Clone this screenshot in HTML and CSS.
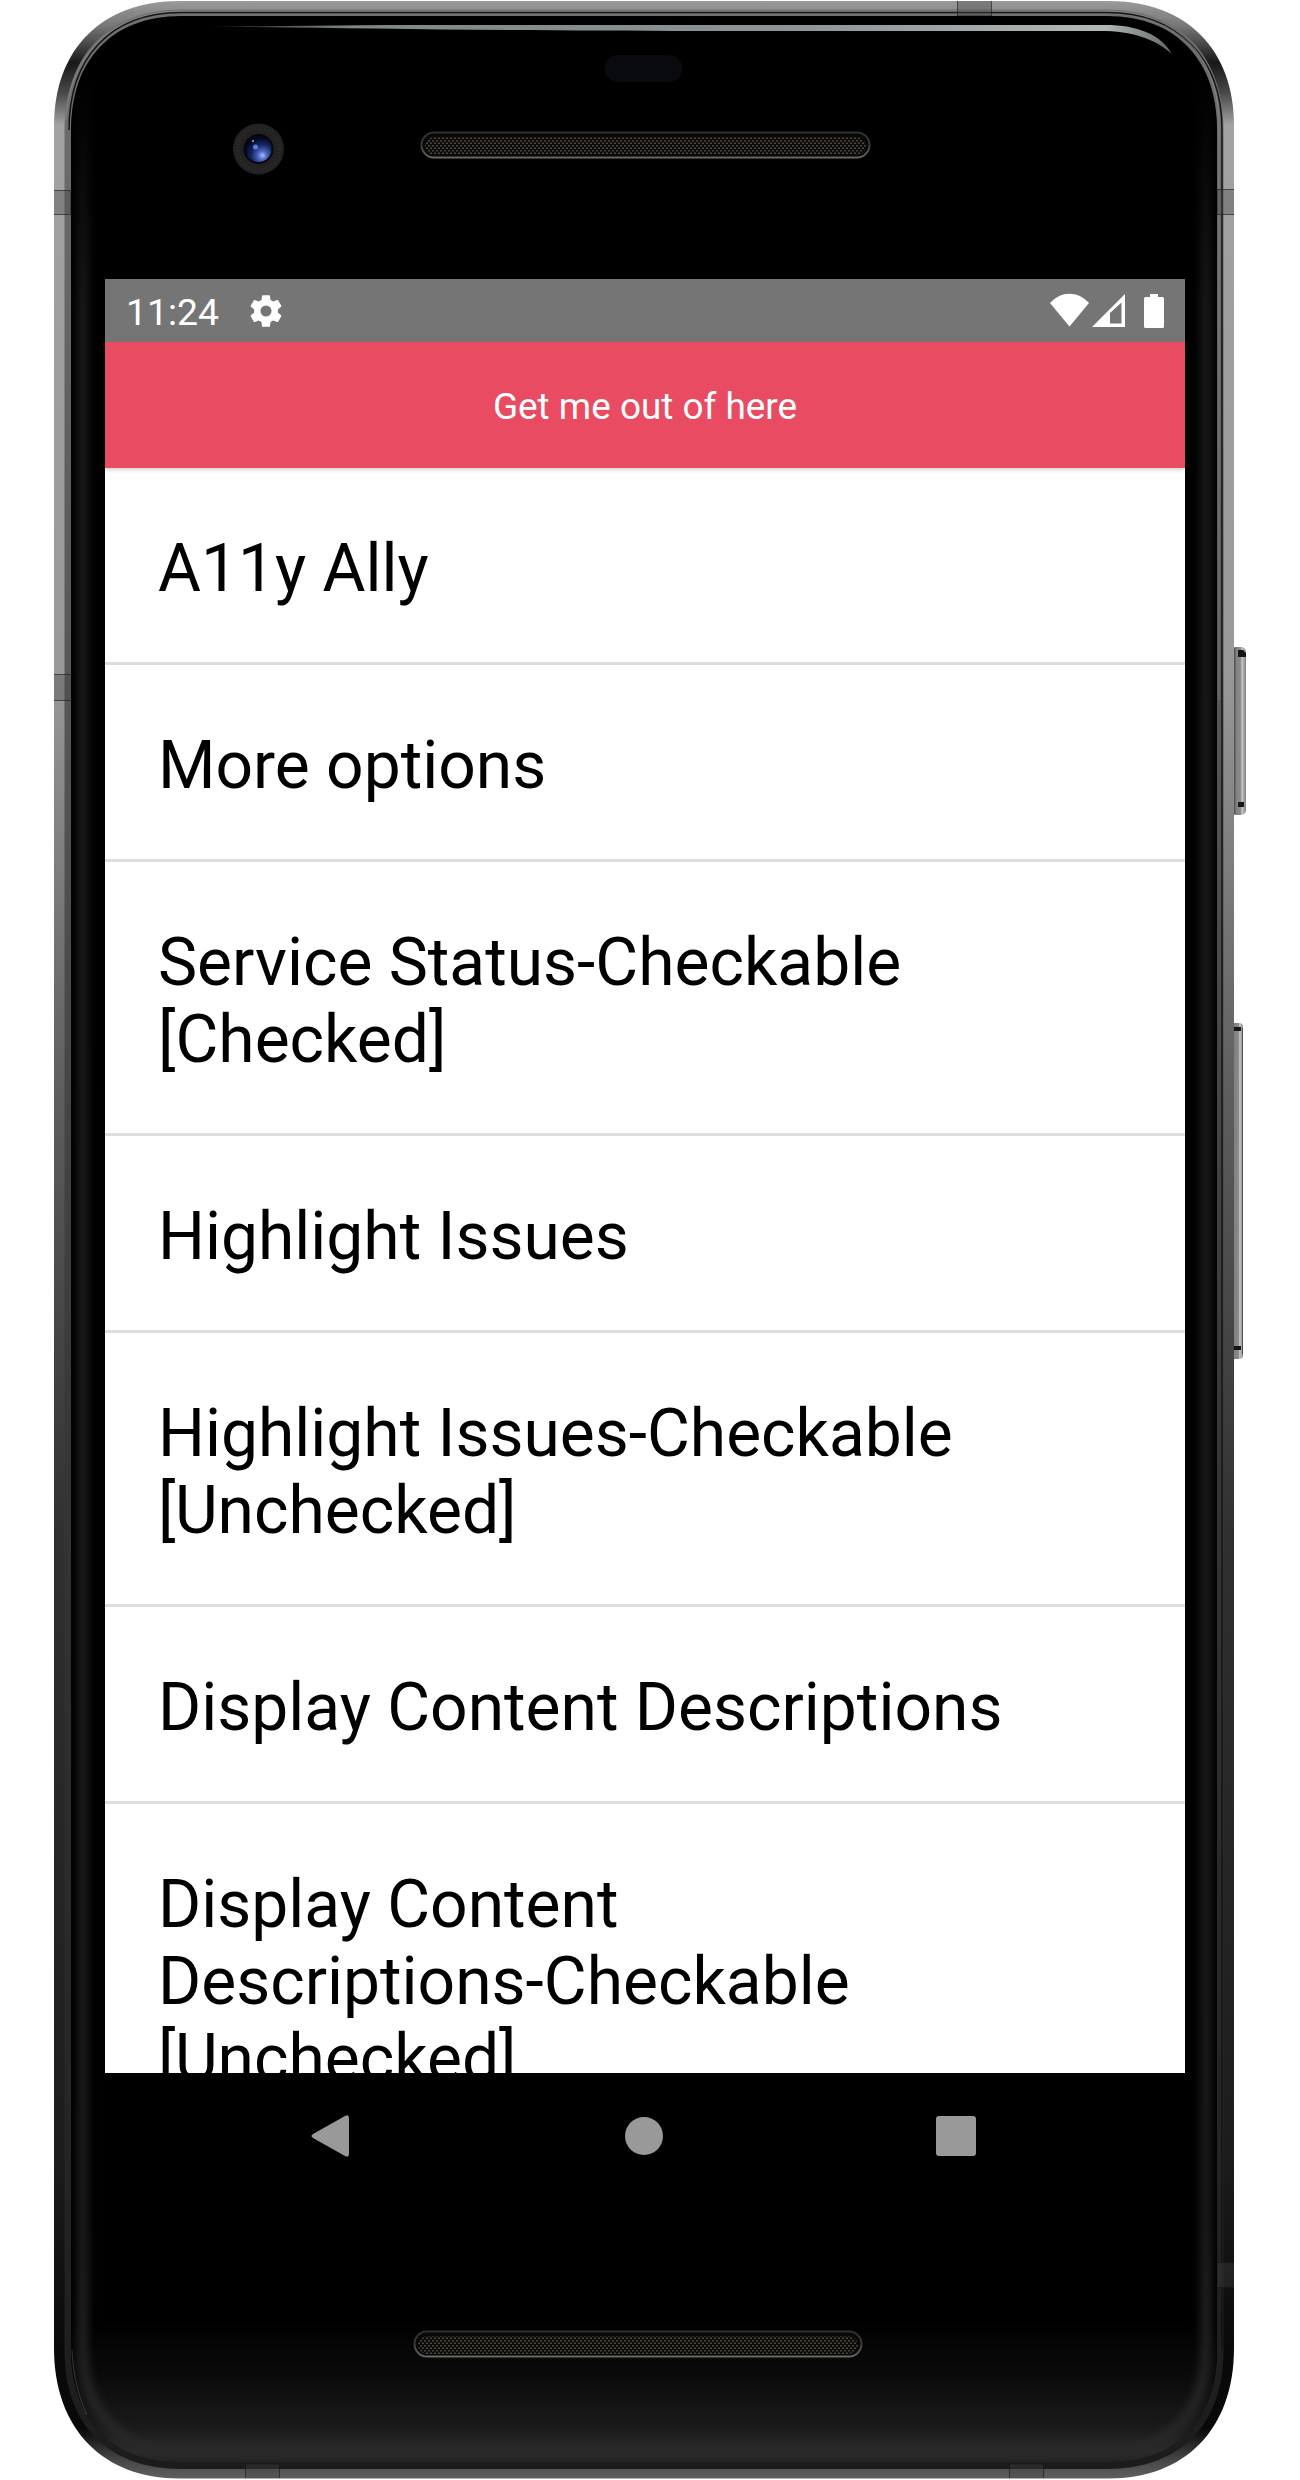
FILE: index.html
```html
<!DOCTYPE html>
<html lang="en">
<head>
<meta charset="utf-8">
<title>A11y Ally</title>
<link rel="stylesheet" href="styles.css">
</head>
<body>
<div class="device">
  <svg class="shell" width="1300" height="2480" viewBox="0 0 1300 2480" aria-hidden="true">
    <defs>
      <linearGradient id="metal" x1="0" y1="0" x2="0" y2="1">
        <stop offset="0" stop-color="#9a9a9a"/><stop offset=".01" stop-color="#777"/>
        <stop offset=".025" stop-color="#181818"/><stop offset=".037" stop-color="#484848"/>
        <stop offset=".05" stop-color="#a2a2a2"/><stop offset=".27" stop-color="#999"/>
        <stop offset=".43" stop-color="#616161"/><stop offset=".62" stop-color="#303030"/>
        <stop offset=".87" stop-color="#1c1c1c"/><stop offset=".95" stop-color="#090909"/>
        <stop offset=".98" stop-color="#090909"/><stop offset=".992" stop-color="#444"/>
        <stop offset="1" stop-color="#606060"/>
      </linearGradient>
      <linearGradient id="bevel" x1="0" y1="0" x2="0" y2="1">
        <stop offset="0" stop-color="#707070"/><stop offset=".3" stop-color="#555"/>
        <stop offset=".6" stop-color="#353535"/><stop offset="1" stop-color="#1c1c1c"/>
      </linearGradient>
      <linearGradient id="sheen" gradientUnits="userSpaceOnUse" x1="0" y1="70" x2="0" y2="2463">
        <stop offset="0" stop-color="#000"/><stop offset=".1" stop-color="#1c1c1c"/>
        <stop offset=".9" stop-color="#1e1e1e"/><stop offset="1" stop-color="#2a2a2a"/>
      </linearGradient>
      <linearGradient id="bottomGlow" x1="0" y1="0" x2="0" y2="1">
        <stop offset="0" stop-color="#000"/><stop offset=".4" stop-color="#0b0b0b"/>
        <stop offset=".75" stop-color="#1a1a1a"/><stop offset=".92" stop-color="#2b2b2b"/>
        <stop offset="1" stop-color="#202020"/>
      </linearGradient>
      <linearGradient id="shine" x1="0" x2="1">
        <stop offset="0" stop-color="#889292" stop-opacity=".2"/><stop offset=".15" stop-color="#7c8888"/>
        <stop offset=".6" stop-color="#8a9494"/><stop offset=".93" stop-color="#b0b8b8"/>
        <stop offset="1" stop-color="#606868"/>
      </linearGradient>
      <linearGradient id="rim" x1="0" y1="0" x2="0" y2="1">
        <stop offset="0" stop-color="#303030"/><stop offset=".5" stop-color="#3a3a3a"/>
        <stop offset="1" stop-color="#6a6661"/>
      </linearGradient>
      <linearGradient id="key" x1="0" x2="1">
        <stop offset="0" stop-color="#777"/><stop offset=".65" stop-color="#8a8a8a"/>
        <stop offset=".75" stop-color="#c8c8c8"/><stop offset="1" stop-color="#808080"/>
      </linearGradient>
      <radialGradient id="lens" cx=".65" cy=".75" r=".7">
        <stop offset="0" stop-color="#a9bcf5"/><stop offset=".25" stop-color="#4c66c0"/>
        <stop offset=".6" stop-color="#162661"/><stop offset="1" stop-color="#03071c"/>
      </radialGradient>
      <pattern id="mesh" width="4" height="5" patternUnits="userSpaceOnUse">
        <rect width="4" height="5" fill="#0d0c0a"/>
        <rect x="0" y="0" width="2" height="1.5" fill="#4a463d"/>
        <rect x="2" y="2.5" width="2" height="1.5" fill="#4a463d"/>
      </pattern>
      <filter id="soft" x="-10%" y="-10%" width="120%" height="120%" color-interpolation-filters="sRGB"><feGaussianBlur stdDeviation="4"/></filter>
      <clipPath id="glassClip"><path d="M71 130C71 60 112 16 181 16H1107C1176 16 1217 60 1217 130V2350C1217 2419 1176 2463 1107 2463H181C112 2463 71 2419 71 2350Z"/></clipPath>
    </defs>
    <!-- side keys -->
    <rect x="1230" y="647" width="16" height="168" rx="5" fill="url(#key)"/>
    <path d="M1238 650h5l3 3v4h-8zM1238 802h6v5h-6z" fill="#151515"/>
    <path d="M1234 648v166" stroke="#555" stroke-width="3"/>
    <rect x="1230" y="1023" width="13" height="336" rx="4" fill="url(#key)"/>
    <path d="M1234 1027h7v4h-7zM1234 1346h7v4h-7z" fill="#151515"/>
    <path d="M1242.500 1028v326" stroke="#505050"/>
    <!-- frame -->
    <path d="M54 126C54 49 102 1 179 1H1109C1186 1 1234 49 1234 126V2348C1234 2430 1184 2478.500 1109 2478.500H179C104 2478.500 54 2430 54 2348Z" fill="url(#metal)"/>
    <path d="M64.500 130C64.500 56 108 9.500 181 9.500H1107C1180 9.500 1223.500 56 1223.500 130V2350C1223.500 2425 1180 2469 1107 2469H181C108 2469 64.500 2425 64.500 2350Z" fill="url(#bevel)"/>
    <path d="M69 130C69 58 110 12.500 181 12.500H1107C1178 12.500 1222 58 1222 130V2350" fill="none" stroke="#151515" stroke-width="1.500"/>
    <path d="M66 120C69 58 110 11 181 11H1107C1178 11 1219 58 1219 125V700" fill="none" stroke="#999" opacity=".5"/>
    <!-- antenna bands -->
    <g fill="#444" fill-opacity=".35" stroke="#151515" stroke-opacity=".6">
      <path d="M54 190.500H71V214.500H54M54 674.500H72V700.500H54M1234 189.500H1217V214.500H1234M1234 2262.500H1217V2287.500H1234M957.500 1V16H991.500V1M245.500 2478V2464H279.500V2478M1009.500 2478V2464H1043.500V2478"/>
    </g>
    <!-- front glass -->
    <g clip-path="url(#glassClip)">
      <rect x="71" y="16" width="1146" height="2447" fill="#000"/>
      <rect x="71" y="2320" width="1146" height="143" fill="url(#bottomGlow)"/>
      <path d="M83 60V2350C83 2415 125 2453 181 2453H1107C1165 2453 1206 2415 1206 2350V60" fill="none" stroke="url(#sheen)" stroke-width="10" filter="url(#soft)"/>
    </g>
    <path d="M210 26.500L390 25H1105C1139 25 1161 35 1172 54C1155 39 1133 31 1100 31H700C500 31 350 28 210 26.500Z" fill="url(#shine)"/>
    <path d="M72 2350C73 2375 79 2398 87 2415" fill="none" stroke="#536273" opacity=".5"/>
    <!-- camera, sensor and speakers -->
    <circle cx="258.500" cy="149" r="25.500" fill="#242123"/>
    <circle cx="258.500" cy="149" r="21" fill="none" stroke="#2f2c2f" stroke-width="4" stroke-dasharray="1 2.500"/>
    <circle cx="258.500" cy="149" r="15" fill="#06070e"/>
    <circle cx="258.500" cy="149" r="13" fill="url(#lens)"/>
    <circle cx="255.500" cy="147" r="2.500" fill="#5b7ce0"/>
    <circle cx="253" cy="141" r="1" fill="#a5b5ed"/>
    <rect x="604.500" y="55" width="78" height="27" rx="13.500" fill="#090a0f"/>
    <rect x="421.500" y="132.500" width="448" height="25" rx="12.500" fill="#080808" stroke="url(#rim)" stroke-width="2"/>
    <rect x="425" y="137" width="441" height="18" rx="9" fill="url(#mesh)"/>
    <rect x="414.500" y="2331.500" width="447" height="25" rx="12.500" fill="#080808" stroke="url(#rim)" stroke-width="2"/>
    <rect x="418" y="2336" width="440" height="18" rx="9" fill="url(#mesh)"/>
  </svg>
  <main class="screen">
    <div class="status">
      <span class="clock">11:24</span>
      <svg class="gear" width="38" height="38" viewBox="0 0 24 24"><path fill="#fff" d="M19.430 12.980c.04-.32.07-.64.07-.98s-.03-.66-.07-.98l2.110-1.650c.19-.15.24-.42.12-.64l-2-3.460c-.12-.22-.39-.3-.61-.22l-2.490 1c-.52-.4-1.080-.73-1.690-.98l-.38-2.650C14.460 2.180 14.250 2 14 2h-4c-.25 0-.46.18-.49.42l-.38 2.650c-.61.25-1.170.59-1.690.98l-2.490-1c-.23-.09-.49 0-.61.22l-2 3.460c-.13.22-.07.49.12.64l2.110 1.650c-.04.32-.07.65-.07.98s.03.66.07.98l-2.110 1.650c-.19.15-.24.42-.12.64l2 3.460c.12.22.39.3.61.22l2.490-1c.52.4 1.080.73 1.690.98l.38 2.650c.03.24.24.42.49.42h4c.25 0 .46-.18.49-.42l.38-2.650c.61-.25 1.170-.59 1.690-.98l2.490 1c.23.09.49 0 .61-.22l2-3.460c.12-.22.07-.49-.12-.64zM12 15.500a3.500 3.500 0 1 1 0-7a3.500 3.500 0 0 1 0 7z"/></svg>
      <svg class="signals" width="116" height="36" viewBox="0 0 116 36" fill="#fff">
        <path d="M0 10C11-2.500 28-2.500 39 10L19.500 33.500Z"/>
        <path fill-rule="evenodd" d="M42 34L75 1V34ZM60 20V30.500H71.500V9.500Z"/>
        <path d="M100 1H108V4H112.500Q114 4 114 5.500V33.500Q114 35 112.500 35H95.500Q94 35 94 33.500V5.500Q94 4 95.500 4H100Z"/>
      </svg>
    </div>
    <header class="banner">Get me out of here</header>
    <ul class="options">
      <li>A11y Ally</li>
      <li>More options</li>
      <li>Service Status-Checkable [Checked]</li>
      <li>Highlight Issues</li>
      <li>Highlight Issues-Checkable [Unchecked]</li>
      <li>Display Content Descriptions</li>
      <li>Display Content <span class="keep">Descriptions-Checkable</span> [Unchecked]</li>
    </ul>
    <nav class="navbar">
      <svg width="40" height="44" viewBox="0 0 40 44"><path d="M2 20L34 2Q38 0 38 4V40Q38 44 34 42L2 24Q-1 22 2 20Z"/></svg>
      <svg width="40" height="40" viewBox="0 0 40 40"><circle cx="20" cy="20" r="19"/></svg>
      <svg width="40" height="40" viewBox="0 0 40 40"><rect width="40" height="40" rx="3"/></svg>
    </nav>
  </main>
</div>
</body>
</html>
```
FILE: styles.css
```css
* {
  box-sizing: border-box;
}

body {
  margin: 0;
  background: #fff;
  font-family: Roboto, "Liberation Sans", sans-serif;
}

.device {
  position: relative;
  width: 1300px;
  height: 2480px;
  padding: 279px 115px 0 105px;
  overflow: hidden;
}

.shell {
  position: absolute;
  inset: 0;
}

.screen {
  position: relative;
  display: flex;
  flex-direction: column;
  width: 1080px;
  height: 1920px;
}

.status {
  display: flex;
  align-items: center;
  height: 63px;
  padding: 0 19px 0 21px;
  background: #757575;
  color: #fff;
}

.clock {
  width: 121px;
  padding-top: 3px;
  font-size: 37.300px;
  line-height: 44px;
}

.signals {
  margin-left: auto;
}

.banner {
  display: flex;
  align-items: center;
  justify-content: center;
  position: relative;
  height: 126px;
  padding-top: 2px;
  background: #e94b62;
  box-shadow: 0 2px 4px rgba(0, 0, 0, .18);
  color: #fff;
  font-size: 36.900px;
}

.options {
  flex: 1;
  min-height: 0;
  margin: 0;
  padding: 0;
  overflow: hidden;
  background: #fff;
  list-style: none;
  color: #000;
  font-size: 65.900px;
  line-height: 77px;
}

.options li {
  padding: 62px 53px 55px;
  border-bottom: 3px solid #dedede;
}

.keep {
  white-space: nowrap;
}

.navbar {
  display: flex;
  justify-content: space-between;
  align-items: center;
  height: 126px;
  padding: 0 209px 0 206px;
  background: #000;
  fill: #999;
}
```
